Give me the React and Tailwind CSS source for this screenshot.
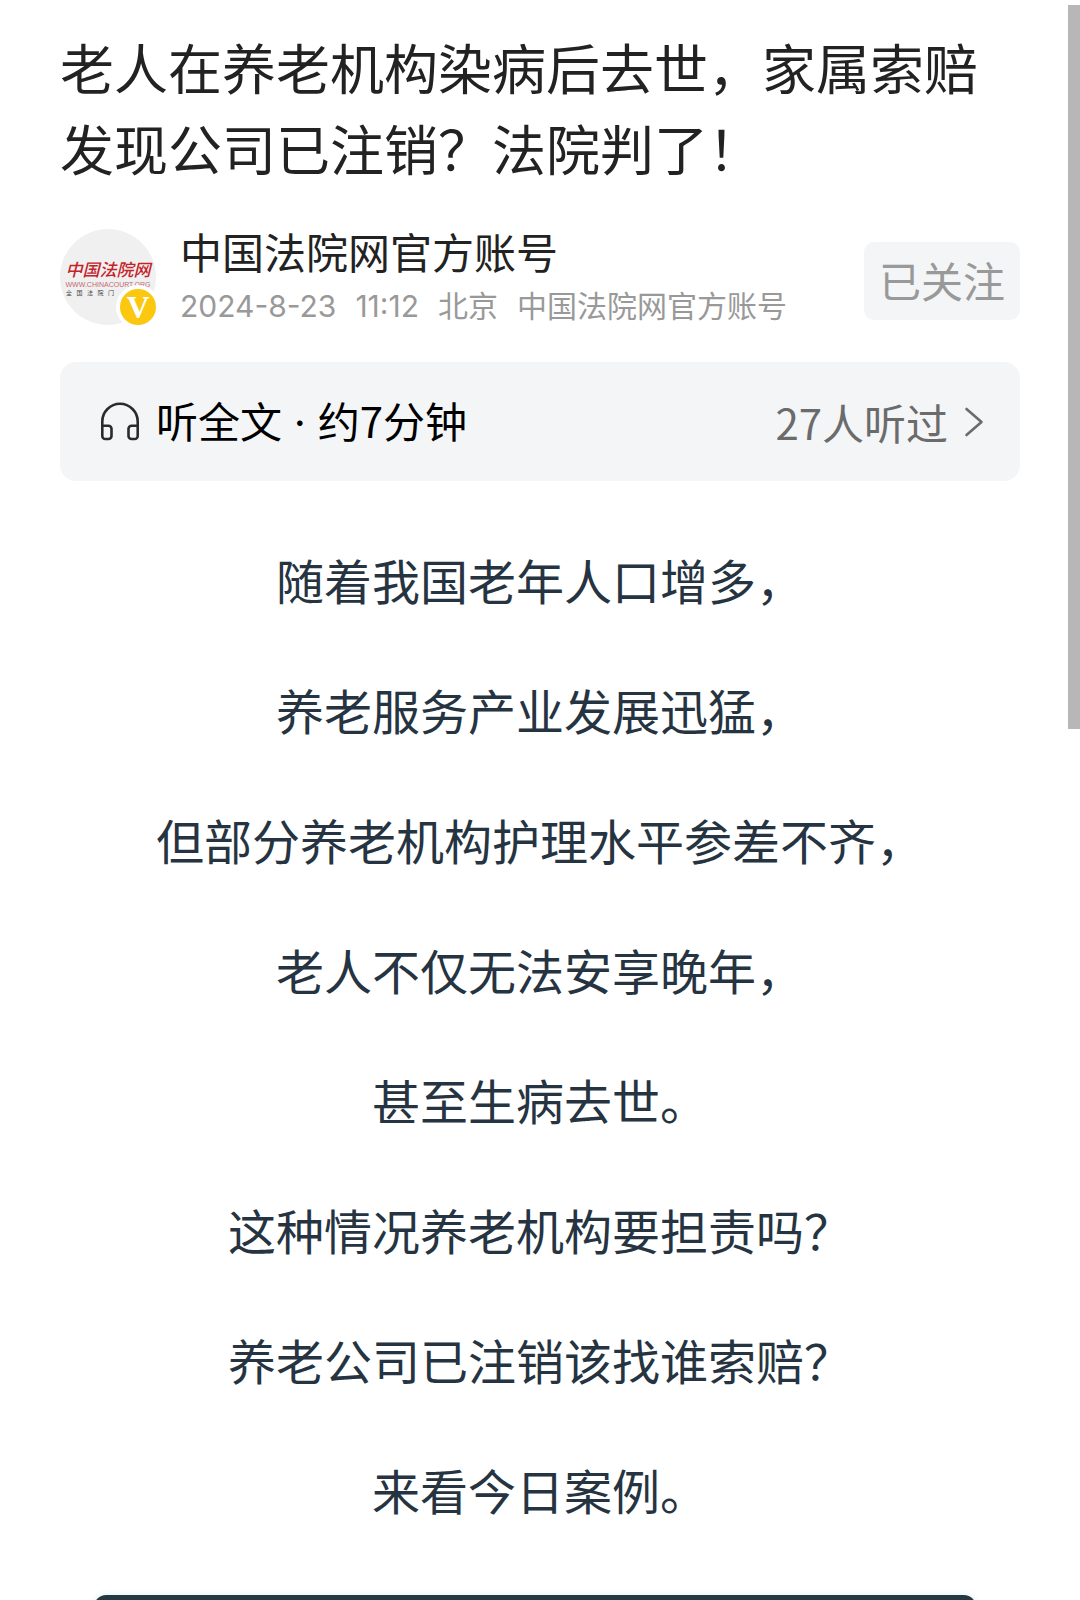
const TITLE = '老人在养老机构染病后去世，家属索赔发现公司已注销？法院判了！';

const PARAGRAPHS = [
  '随着我国老年人口增多，',
  '养老服务产业发展迅猛，',
  '但部分养老机构护理水平参差不齐，',
  '老人不仅无法安享晚年，',
  '甚至生病去世。',
  '这种情况养老机构要担责吗？',
  '养老公司已注销该找谁索赔？',
  '来看今日案例。',
];

function Avatar() {
  return (
    <div className="relative mt-[5px] flex size-24 shrink-0 flex-col items-center justify-center rounded-full bg-[#f0f0f0]">
      <span className="whitespace-nowrap text-[17px] font-medium italic leading-[24px] text-[#c4232b]">
        中国法院网
      </span>
      <span className="whitespace-nowrap font-['Liberation_Sans',sans-serif] text-[7px] leading-[8px] text-[#c46a70]">
        WWW.CHINACOURT.ORG
      </span>
      <span className="ml-[6px] flex w-[48px] justify-between self-start text-[6px] leading-[8px] text-[#444]">
        {[...'全国法院门'].map((c) => (
          <span key={c}>{c}</span>
        ))}
      </span>
      <span className="absolute -right-1 -bottom-1 flex size-11 items-center justify-center rounded-full border-4 border-white bg-[#fbc80f] font-['Liberation_Serif',serif] text-[32px] font-bold leading-none text-white">
        V
      </span>
    </div>
  );
}

function HeadphonesIcon() {
  return (
    <svg className="size-10" viewBox="0 0 40 40" fill="none" stroke="#2b2b2b" strokeWidth="2.6" strokeLinejoin="round" aria-hidden="true">
      <path d="M2.3 25V19.5a17.7 17.7 0 0 1 35.4 0V25" />
      <path d="M2.3 23.8H8.5a3 3 0 0 1 3 3V34a3 3 0 0 1-3 3H5.3a3 3 0 0 1-3-3Z" />
      <path d="M37.7 23.8H31.5a3 3 0 0 0-3 3V34a3 3 0 0 0 3 3h3.2a3 3 0 0 0 3-3Z" />
    </svg>
  );
}

export default function App() {
  return (
    <div className="relative max-h-screen overflow-hidden bg-white font-['Noto_Sans_CJK_SC',sans-serif]">
      <main lang="zh-CN" className="px-[60px] pt-[26px]">
        <h1 className="text-[54px] leading-[81px] text-[#222]">{TITLE}</h1>

        <header className="mt-9 flex items-start">
          <Avatar />
          <div className="ml-6 min-w-0 flex-1">
            <div className="text-[42px] leading-[54px] text-[#222]">中国法院网官方账号</div>
            <div className="flex gap-[19px] whitespace-nowrap font-['Inter','Noto_Sans_CJK_SC',sans-serif] text-[30px] leading-[56px] text-[#999]">
              <time>2024-8-23</time>
              <span>11:12</span>
              <span>北京</span>
              <span>中国法院网官方账号</span>
            </div>
          </div>
          <button type="button" className="mt-[18px] h-[78px] rounded-[10px] bg-[#f4f5f7] px-[15px] pb-[2px] text-[42px] leading-[60px] text-[#999]">
            已关注
          </button>
        </header>

        <button type="button" className="mt-7 flex h-[119px] w-full items-center rounded-2xl bg-[#f4f5f7] px-9 text-[42px] leading-[60px]">
          <span className="flex items-center gap-4 pl-1 text-black">
            <HeadphonesIcon />
            <span>
              听全文<span className="font-['Inter',sans-serif]"> · </span>约7分钟
            </span>
          </span>
          <span className="ml-auto flex items-center gap-4 text-[#6b6b6b]">
            27人听过
            <svg className="h-8 w-5" viewBox="0 0 20 32" fill="none" stroke="#6b6b6b" strokeWidth="2.6" strokeLinecap="round" strokeLinejoin="round" aria-hidden="true">
              <path d="M2.5 3 17.5 16 2.5 29" />
            </svg>
          </span>
        </button>

        <article className="mt-[58px] flex flex-col gap-[50px] text-center text-[48px] leading-[80px] text-[#263442]">
          {PARAGRAPHS.map((text) => (
            <p key={text}>{text}</p>
          ))}
        </article>

        <section className="mt-[66px] mr-[44px] ml-[34px] h-40 rounded-xl bg-[#24393f] shadow-[0_0_8px_#dff0f4]" />
      </main>
      <div className="absolute top-[5px] right-0 h-[724px] w-3 bg-[#b7b7b7]" />
    </div>
  );
}
